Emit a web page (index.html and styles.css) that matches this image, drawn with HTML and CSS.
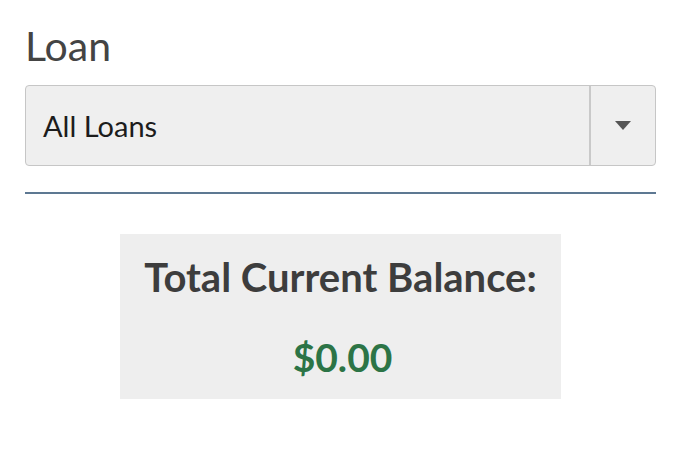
FILE: index.html
```html
<!DOCTYPE html>
<html>
<head>
<meta charset="utf-8">
<link rel="stylesheet" href="styles.css">
</head>
<body>
<div class="page">
  <label class="label">Loan</label>
  <div class="select">
    <div class="select-value">All Loans</div>
    <div class="select-btn">
      <svg width="16" height="9" viewBox="0 0 16 9"><path d="M0 0H16L8 9Z" fill="#555"/></svg>
    </div>
  </div>
  <hr class="rule">
  <div class="balance">
    <div class="balance-title">Total Current Balance:</div>
    <div class="balance-amount">$0.00</div>
  </div>
</div>
</body>
</html>
```
FILE: styles.css
```css
html, body {
  margin: 0;
  padding: 0;
  background: #fff;
}
.page {
  font-family: Lato, "Noto Sans", sans-serif;
  padding: 21px 24px 0 25px;
  display: flex;
  flex-direction: column;
}
.label {
  font-size: 41px;
  color: #444;
  line-height: 50px;
  margin-bottom: 14px;
}
.select {
  height: 81px;
  box-sizing: border-box;
  border: 1px solid #c6c6c6;
  border-radius: 4px;
  background: #efefef;
  display: flex;
}
.select-value {
  flex: 1;
  display: flex;
  align-items: center;
  padding-left: 17px;
  font-size: 29px;
  color: #1c1c1c;
}
.select-btn {
  width: 64px;
  border-left: 2px solid #c9c9c9;
  display: flex;
  align-items: center;
  justify-content: center;
}
.rule {
  margin: 26px 0 0 0;
  border: 0;
  height: 2px;
  background: #5d7892;
}
.balance {
  align-self: center;
  margin-top: 40px;
  width: 441px;
  height: 165px;
  background: #eeeeee;
  display: flex;
  flex-direction: column;
  align-items: center;
}
.balance-title {
  font-weight: bold;
  font-size: 40px;
  color: #3d3d3d;
  margin-top: 18px;
  line-height: 50px;
}
.balance-amount {
  font-size: 39px;
  color: #2c7446;
  margin-top: 32px;
  line-height: 46px;
  font-weight: bold;
  padding-left: 4px;
}
```
